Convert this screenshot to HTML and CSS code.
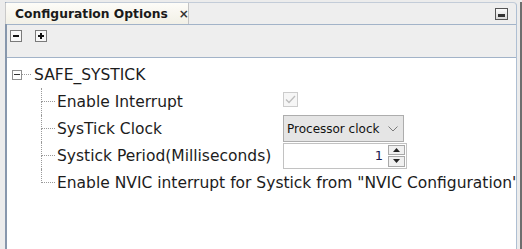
FILE: index.html
```html
<!DOCTYPE html>
<html lang="en">
<head>
    <meta charset="UTF-8">
    <meta name="viewport" content="width=device-width, initial-scale=1.0">
    <title>Configuration Options</title>
    <link rel="stylesheet" href="styles.css">
</head>
<body>
    <div class="window">
        <div class="panel">
            <!-- Tab header -->
            <div class="tab-bar">
                <div class="tab">Configuration Options <span class="tab-close">&times;</span></div>
                <span class="minimize"><span class="minimize-bar"></span></span>
            </div>

            <!-- Collapse / expand all -->
            <div class="toolbar">
                <span class="tool-btn">
                    <svg width="12" height="12" viewBox="0 0 12 12">
                        <rect x="0.5" y="0.5" width="11" height="11" fill="#f7f7f7" stroke="#7a7a7a"/>
                        <line x1="3" y1="6" x2="9" y2="6" stroke="#111" stroke-width="2"/>
                    </svg>
                </span>
                <span class="tool-btn">
                    <svg width="12" height="12" viewBox="0 0 12 12">
                        <rect x="0.5" y="0.5" width="11" height="11" fill="#f7f7f7" stroke="#7a7a7a"/>
                        <line x1="3" y1="6" x2="9" y2="6" stroke="#111" stroke-width="2"/>
                        <line x1="6" y1="3" x2="6" y2="9" stroke="#111" stroke-width="2"/>
                    </svg>
                </span>
            </div>

            <div class="tree">
                <div class="tree-row root">
                    <span class="expander"><span class="expander-bar"></span></span>
                    <span class="stub"></span>
                    <span class="label">SAFE_SYSTICK</span>
                </div>

                <div class="tree-row child">
                    <span class="branch"><span class="branch-top"></span><span class="branch-bottom"></span></span>
                    <span class="label">Enable Interrupt</span>
                    <span class="checkbox">
                        <svg width="15" height="15" viewBox="0 0 15 15">
                            <rect x="0.5" y="0.5" width="14" height="14" fill="#f6f6f6" stroke="#cccccc"/>
                            <polyline points="3,7.5 6,10.5 12,4" fill="none" stroke="#bdbdbd" stroke-width="1.3"/>
                        </svg>
                    </span>
                </div>

                <div class="tree-row child">
                    <span class="branch"><span class="branch-top"></span><span class="branch-bottom"></span></span>
                    <span class="label">SysTick Clock</span>
                    <span class="select">
                        <span class="select-text">Processor clock</span>
                        <svg width="10" height="6" viewBox="0 0 10 6">
                            <polyline points="0.5,0.5 5,5 9.5,0.5" fill="none" stroke="#7a7a7a"/>
                        </svg>
                    </span>
                </div>

                <div class="tree-row child">
                    <span class="branch"><span class="branch-top"></span><span class="branch-bottom"></span></span>
                    <span class="label">Systick Period(Milliseconds)</span>
                    <span class="spinner">
                        <span class="spinner-value">1</span>
                        <span class="spinner-buttons">
                            <span class="spin-btn"><svg width="7" height="4" viewBox="0 0 7 4"><polygon points="0,4 3.5,0 7,4" fill="#222"/></svg></span>
                            <span class="spin-btn"><svg width="7" height="4" viewBox="0 0 7 4"><polygon points="0,0 7,0 3.5,4" fill="#222"/></svg></span>
                        </span>
                    </span>
                </div>

                <div class="tree-row child last">
                    <span class="branch"><span class="branch-top"></span><span class="branch-bottom"></span></span>
                    <span class="label wide">Enable NVIC interrupt for Systick from "NVIC Configuration"</span>
                </div>
            </div>
        </div>
        <div class="edge"></div>
    </div>
</body>
</html>
```

FILE: styles.css
```css
* {
    margin: 0;
    padding: 0;
    box-sizing: border-box;
}

body {
    width: 522px;
    height: 249px;
    overflow: hidden;
    background-color: #ececec;
    font-family: "DejaVu Sans", Verdana, sans-serif;
    color: #1c1c1c;
}

.window {
    display: flex;
    height: 100%;
    padding: 2px 0 0 5px;
}

.panel {
    width: 512px;
    display: flex;
    flex-direction: column;
    border-top: 1px solid #c3ccd8;
    border-left: 2px solid #8797ac;
    border-right: 1px solid #aebfd3;
    border-top-right-radius: 4px;
    background-color: #eeeeee;
}

.edge {
    width: 2px;
    margin-left: 3px;
    background-color: #6e6e6e;
}

/* Tab header */
.tab-bar {
    height: 22px;
    display: flex;
    align-items: center;
    border-bottom: 1px solid #a2b3c8;
}

.tab {
    height: 100%;
    width: 184px;
    margin-left: -2px;
    padding-left: 9px;
    display: flex;
    align-items: center;
    white-space: nowrap;
    font-size: 12.3px;
    font-weight: bold;
    color: #1a1a1a;
    background: linear-gradient(#fdfcf8, #f2f0e6);
    border-left: 1px solid #c9c9c9;
    border-right: 1px solid #c4c4c4;
}

.tab-close {
    margin-left: 11px;
    font-size: 12px;
    color: #333;
}

.minimize {
    margin-left: auto;
    margin-right: 8px;
    width: 13px;
    height: 12px;
    display: flex;
    align-items: flex-end;
    justify-content: center;
    padding-bottom: 2px;
    border: 1px solid #555;
    background: linear-gradient(#fbfbfb, #d8d8d8);
}

.minimize-bar {
    width: 7px;
    height: 3px;
    background-color: #333;
}

/* Toolbar */
.toolbar {
    height: 33px;
    display: flex;
    gap: 13px;
    padding: 5px 0 0 3px;
    border-bottom: 1px solid #a2b3c8;
}

.tool-btn {
    display: flex;
    height: 12px;
}

/* Tree */
.tree {
    flex: 1;
    background-color: white;
    padding-top: 3px;
    overflow: hidden;
    font-size: 15.5px;
}

.tree-row {
    height: 27px;
    display: flex;
    align-items: center;
    white-space: nowrap;
}

.root {
    padding-left: 5px;
}

.expander {
    width: 10px;
    height: 10px;
    display: flex;
    align-items: center;
    justify-content: center;
    border: 1px solid #8f8f8f;
    background-color: white;
}

.expander-bar {
    width: 6px;
    height: 1px;
    background-color: #333;
}

.stub {
    width: 9px;
    border-top: 1px dotted #9a9a9a;
}

.root .label {
    margin-left: 3px;
}

.child {
    padding-left: 34px;
}

.branch {
    width: 14px;
    flex-shrink: 0;
    align-self: stretch;
    display: flex;
    flex-direction: column;
}

.branch-top {
    flex: 1;
    border-left: 1px dotted #9a9a9a;
    border-bottom: 1px dotted #9a9a9a;
}

.branch-bottom {
    flex: 1;
    border-left: 1px dotted #9a9a9a;
}

.last .branch-bottom {
    border-left: none;
}

.child .label {
    width: 226px;
    flex-shrink: 0;
    margin-left: 2px;
}

.child .label.wide {
    width: auto;
}

.checkbox {
    display: flex;
    margin-top: -4px;
}

.select {
    width: 121px;
    height: 27px;
    display: flex;
    align-items: center;
    justify-content: space-between;
    padding: 0 5px 0 3px;
    border: 1px solid #adadad;
    background-color: #e5e5e5;
    font-size: 12px;
    color: #111;
}

.spinner {
    width: 124px;
    height: 26px;
    display: flex;
    border: 1px solid #c2c2c2;
    background-color: white;
}

.spinner-value {
    flex: 1;
    text-align: right;
    padding-right: 4px;
    align-self: center;
    font-size: 13px;
    color: #1a1a50;
}

.spinner-buttons {
    width: 19px;
    display: flex;
    flex-direction: column;
    padding: 1px;
    gap: 1px;
}

.spin-btn {
    flex: 1;
    display: flex;
    align-items: center;
    justify-content: center;
    border: 1px solid #a9a9a9;
    background-color: #f0f0f0;
}
```
